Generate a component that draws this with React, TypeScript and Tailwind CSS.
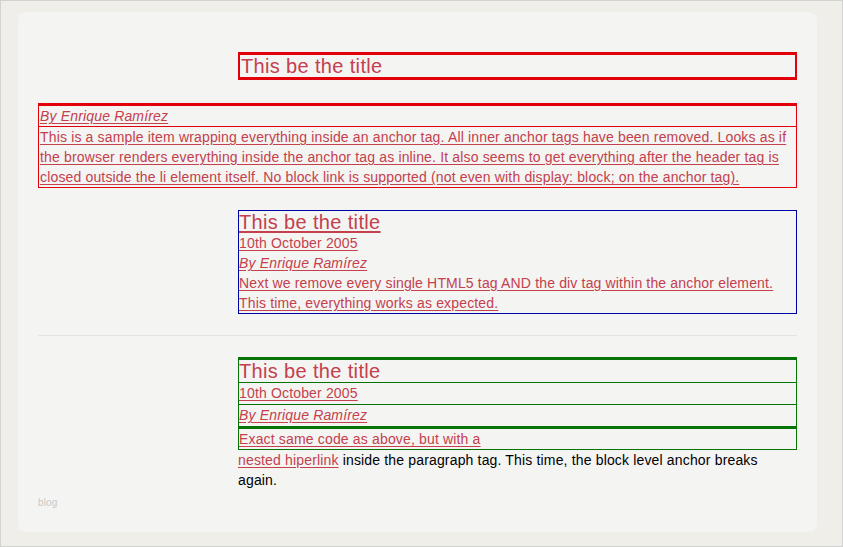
const font = "font-['Liberation_Sans',Arial,sans-serif]"

function Title({ className = '' }: { className?: string }) {
  return <div className={`text-[20px] leading-[22px] tracking-[0.35px] ${className}`}>This be the title</div>
}

export default function App() {
  return (
    <div className={`w-[843px] h-[547px] border border-[#d2d2d0] bg-[#efeee9] pt-[11px] pl-[17px] ${font}`}>
      <div className="w-[799px] h-[520px] rounded-lg bg-[#f4f4f3] px-5 pt-10 text-[14px] tracking-[0.16px] text-[#c4404c]">
        {/* first attempt: block wrapped in anchor */}
        <div className="ml-[200px] border-2 border-y-[3px] border-[#e2000b] px-px">
          <Title />
        </div>
        <div className="mt-[23px] border border-t-[3px] border-[#e2000b] underline underline-offset-2">
          <div className="border-b border-[#e2000b] italic leading-[20px] pl-px">By Enrique Ramírez</div>
          <p className="leading-[20px] pl-px pr-1">
            This is a sample item wrapping everything inside an anchor tag. All inner anchor tags have been
            removed. Looks as if the browser renders everything inside the anchor tag as inline. It also seems to
            get everything after the header tag is closed outside the li element itself. No block link is supported
            (not even with display: block; on the anchor tag).
          </p>
        </div>

        {/* second attempt */}
        <a href="#" className="mt-[22px] ml-[200px] block border border-[#0000a8] underline underline-offset-2">
          <Title className="leading-[21px]" />
          <div className="leading-[20px]">10th October 2005</div>
          <div className="italic leading-[20px]">By Enrique Ramírez</div>
          <p className="leading-[20px] pr-3">
            Next we remove every single HTML5 tag AND the div tag within the anchor element. This time, everything
            works as expected.
          </p>
        </a>

        <hr className="mt-[21px] border-t border-[#e4e4e2]" />

        {/* third attempt */}
        <div className="mt-[21px] ml-[200px]">
          <div className="border border-t-[3px] border-[#067306]">
            <Title />
          </div>
          <div className="border-x border-b border-[#067306] leading-[21px] underline underline-offset-2">
            10th October 2005
          </div>
          <div className="border-x border-b-[3px] border-[#067306] leading-[21px] italic underline underline-offset-2">
            By Enrique Ramírez
          </div>
          <div className="border-x border-b border-[#067306] leading-[20px] underline underline-offset-2">
            Exact same code as above, but with a
          </div>
          <p className="leading-[20px] text-black pr-4">
            <a href="#" className="text-[#c4404c] underline underline-offset-2">
              nested hiperlink
            </a>{' '}
            inside the paragraph tag. This time, the block level anchor breaks again.
          </p>
        </div>

        <div className="mt-[5px] text-[10px] text-[#c9c9c7]">blog</div>
      </div>
    </div>
  )
}
